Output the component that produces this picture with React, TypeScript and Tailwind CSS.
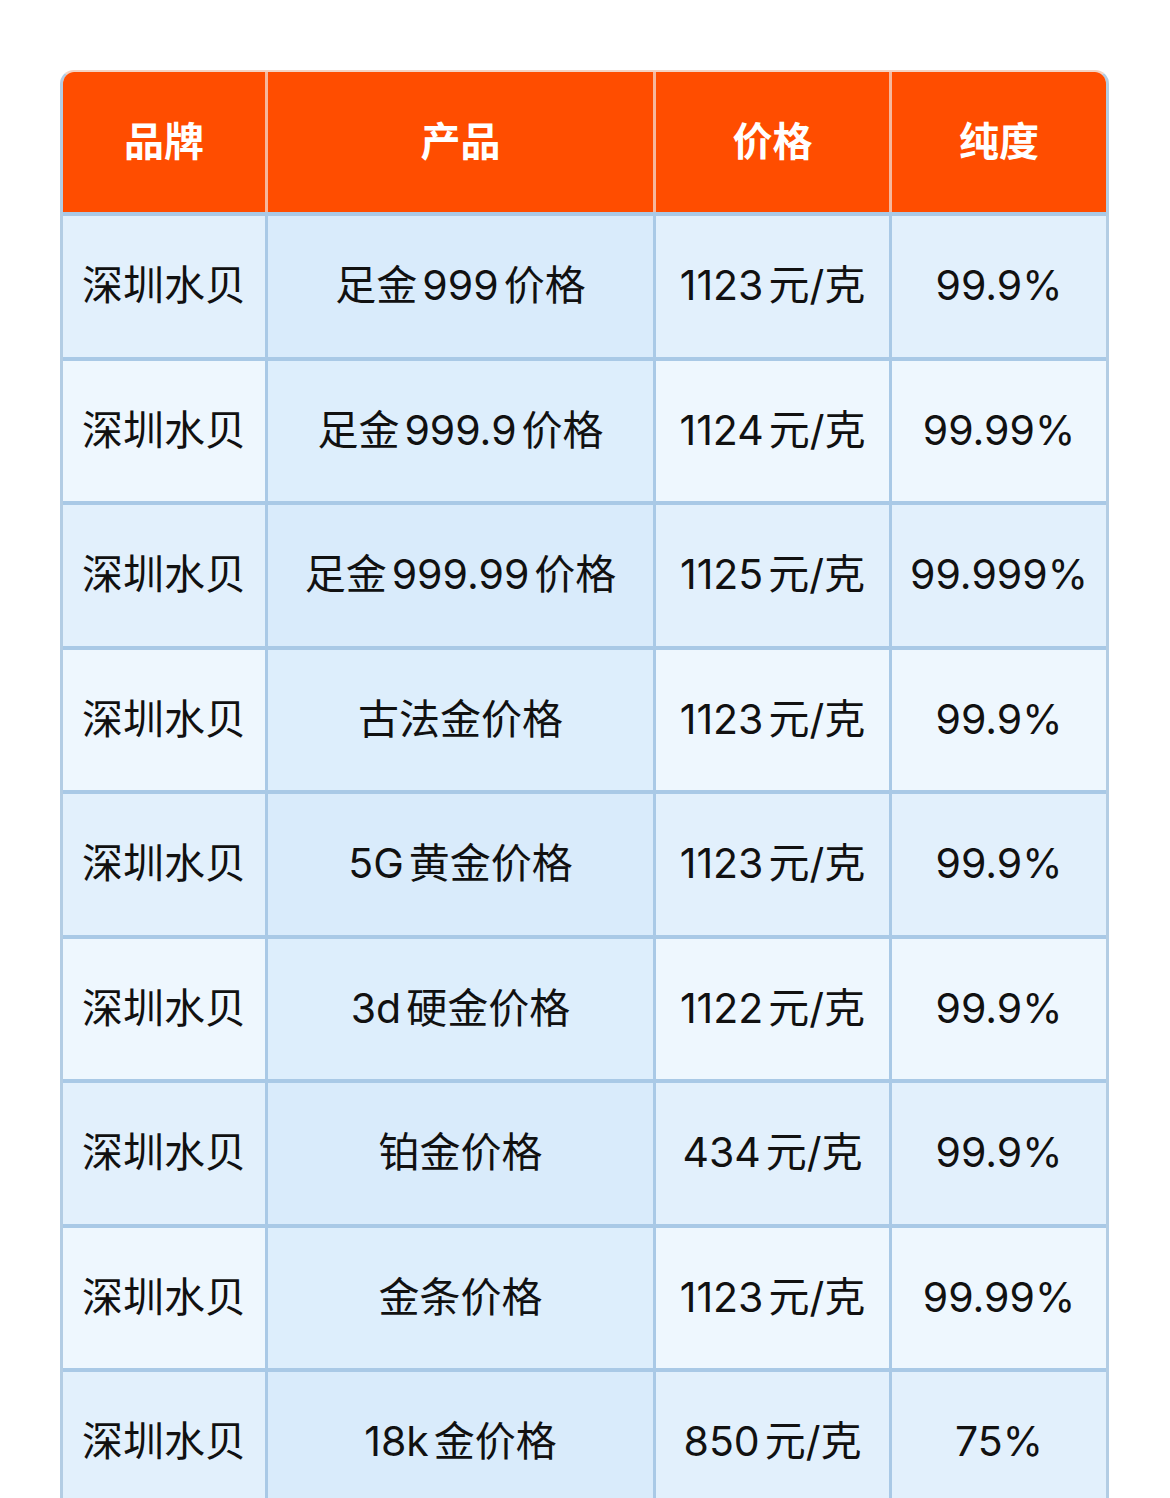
import React from 'react';

const rows = [
  { brand: '深圳水贝', product: '足金999价格', price: '1123元/克', purity: '99.9%' },
  { brand: '深圳水贝', product: '足金999.9价格', price: '1124元/克', purity: '99.99%' },
  { brand: '深圳水贝', product: '足金999.99价格', price: '1125元/克', purity: '99.999%' },
  { brand: '深圳水贝', product: '古法金价格', price: '1123元/克', purity: '99.9%' },
  { brand: '深圳水贝', product: '5G黄金价格', price: '1123元/克', purity: '99.9%' },
  { brand: '深圳水贝', product: '3d硬金价格', price: '1122元/克', purity: '99.9%' },
  { brand: '深圳水贝', product: '铂金价格', price: '434元/克', purity: '99.9%' },
  { brand: '深圳水贝', product: '金条价格', price: '1123元/克', purity: '99.99%' },
  { brand: '深圳水贝', product: '18k金价格', price: '850元/克', purity: '75%' },
];

const font = { fontFamily: 'Inter, "Noto Sans CJK SC", "Noto Sans", sans-serif' };

// small gap between latin/number runs and CJK, like the phone's autospacing
function Spaced({ text }: { text: string }) {
  const parts = text.split(/([0-9A-Za-z.%]+)/).filter((p) => p !== '');
  return (
    <>
      {parts.map((p, i) => {
        if (!/^[0-9A-Za-z.%]+$/.test(p)) return <span key={i}>{p}</span>;
        const cls = (i > 0 ? 'ml-[5px] ' : '') + (i < parts.length - 1 && parts[i + 1] !== '%' ? 'mr-[5px]' : '');
        return (
          <span key={i} className={cls}>
            {p}
          </span>
        );
      })}
    </>
  );
}

export default function App() {
  return (
    <div className="w-[1170px] h-[1498px] overflow-hidden bg-white" style={font}>
      <div className="ml-[60px] mt-[70px] w-[1049px] rounded-t-[14px] overflow-hidden border-x-[3px] border-t-[2px] border-x-[#b3cde4] border-t-[#f3d3c4]">
        {/* header */}
        <div className="grid grid-cols-[202px_388px_236px_217px] h-[140px] bg-[#ff4d00] text-white text-[40px] font-bold">
          <div className="flex items-center justify-center pb-[1px]">品牌</div>
          <div className="flex items-center justify-center pb-[1px] border-l-[3px] border-[#f6b79c]">产品</div>
          <div className="flex items-center justify-center pb-[1px] border-l-[3px] border-[#f6b79c]">价格</div>
          <div className="flex items-center justify-center pb-[1px] border-l-[3px] border-[#f6b79c]">纯度</div>
        </div>
        {/* body */}
        {rows.map((r, i) => {
          const even = i % 2 === 0;
          return (
            <div
              key={i}
              className={
                'grid grid-cols-[202px_388px_236px_217px] h-[144.5px] border-t-[4px] border-[#a9c9e6] text-[41px] text-[#111111] leading-none ' +
                (even ? 'bg-[#e2f0fc]' : 'bg-[#eef7fe]')
              }
            >
              <div className="flex items-center justify-center pb-[1px]">{r.brand}</div>
              <div
                className={
                  'flex items-center justify-center pb-[1px] border-l-[3px] border-[#a9c9e6] ' +
                  (even ? 'bg-[#d9ebfb]' : 'bg-[#ddeefc]')
                }
              >
                <Spaced text={r.product} />
              </div>
              <div className="flex items-center justify-center pb-[1px] border-l-[3px] border-[#a9c9e6]">
                <Spaced text={r.price} />
              </div>
              <div className="flex items-center justify-center pb-[1px] border-l-[3px] border-[#a9c9e6]">{r.purity}</div>
            </div>
          );
        })}
      </div>
    </div>
  );
}
